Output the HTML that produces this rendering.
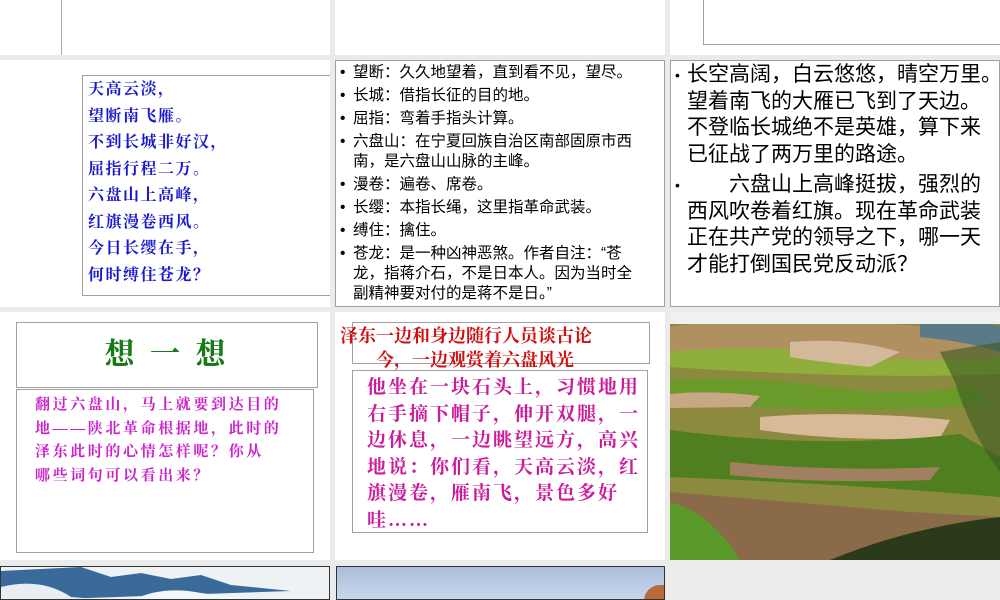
<!DOCTYPE html>
<html><head><meta charset="utf-8"><style>
*{margin:0;padding:0;box-sizing:border-box}
body{width:1000px;height:600px;background:#ebebeb;position:relative;overflow:hidden;font-family:"Liberation Sans","Noto Sans CJK SC",sans-serif}
.p{position:absolute;background:#fff;overflow:hidden}
.b{position:absolute;border:1px solid #a0a0a0;background:#fff}
.k{font-family:"Liberation Serif","Noto Serif CJK SC",serif;font-weight:bold;white-space:nowrap}
.it{position:relative;padding-left:13px;margin-bottom:3px;white-space:nowrap}
.it span{position:absolute;left:0}
svg{display:block}
</style></head><body>
<!-- row1 -->
<div class="p" style="left:0;top:0;width:330px;height:55px"><div style="position:absolute;left:61px;top:0;width:1px;height:55px;background:#aaa"></div></div>
<div class="p" style="left:335px;top:0;width:330px;height:55px"></div>
<div class="p" style="left:670px;top:0;width:330px;height:55px"><div class="b" style="left:33px;top:-2px;width:300px;height:47px"></div></div>
<!-- row2 -->
<div class="p" style="left:0;top:60px;width:330px;height:247px">
 <div class="b k" style="left:82px;top:15px;width:260px;height:221px;color:#1a1acc;font-size:16px;letter-spacing:1.5px;line-height:26.5px;padding:1px 0 0 5px">天高云淡，<br>望断南飞雁。<br>不到长城非好汉，<br>屈指行程二万。<br>六盘山上高峰，<br>红旗漫卷西风。<br>今日长缨在手，<br>何时缚住苍龙？</div>
</div>
<div class="p" style="left:335px;top:60px;width:330px;height:247px;border:1px solid #a0a0a0">
 <div style="position:absolute;left:4px;top:2px;width:330px;font-size:15.5px;line-height:20px;color:#000">
 <div class="it"><span>•</span>望断：久久地望着，直到看不见，望尽。</div>
 <div class="it"><span>•</span>长城：借指长征的目的地。</div>
 <div class="it"><span>•</span>屈指：弯着手指头计算。</div>
 <div class="it"><span>•</span>六盘山：在宁夏回族自治区南部固原市西<br>南，是六盘山山脉的主峰。</div>
 <div class="it"><span>•</span>漫卷：遍卷、席卷。</div>
 <div class="it"><span>•</span>长缨：本指长绳，这里指革命武装。</div>
 <div class="it"><span>•</span>缚住：擒住。</div>
 <div class="it"><span>•</span>苍龙：是一种凶神恶煞。作者自注：“苍<br>龙，指蒋介石，不是日本人。因为当时全<br>副精神要对付的是蒋不是日。”</div>
 </div>
</div>
<div class="p" style="left:670px;top:60px;width:330px;height:247px;border:1px solid #a0a0a0">
 <div style="position:absolute;left:4px;top:1px;width:360px;font-size:21px;line-height:26.5px;color:#000">
 <div class="it" style="padding-left:12px;margin-bottom:4px"><span style="font-size:14px">•</span>长空高阔，白云悠悠，晴空万里。<br>望着南飞的大雁已飞到了天边。<br>不登临长城绝不是英雄，算下来<br>已征战了两万里的路途。</div>
 <div class="it" style="padding-left:12px"><span style="font-size:14px">•</span>　　六盘山上高峰挺拔，强烈的<br>西风吹卷着红旗。现在革命武装<br>正在共产党的领导之下，哪一天<br>才能打倒国民党反动派？</div>
 </div>
</div>
<!-- row3 -->
<div class="p" style="left:0;top:312px;width:330px;height:248px">
 <div class="b k" style="left:16px;top:10px;width:302px;height:66px;color:#167a16;font-size:30px;text-align:center;padding:6px 0 0 0;letter-spacing:4px">想 一 想</div>
 <div class="b k" style="left:16px;top:77px;width:298px;height:164px;color:#cc22cc;font-size:15px;letter-spacing:2.6px;line-height:23.5px;padding:4px 0 0 18px">翻过六盘山，马上就要到达目的<br>地——陕北革命根据地，此时的<br>泽东此时的心情怎样呢？你从<br>哪些词句可以看出来？</div>
</div>
<div class="p" style="left:335px;top:312px;width:330px;height:248px">
 <div class="b" style="left:17px;top:10px;width:298px;height:42px"></div>
 <div class="k" style="position:absolute;left:5px;top:12px;width:325px;color:#d01010;font-size:18px;line-height:24px">泽东一边和身边随行人员谈古论<br>　　今，一边观赏着六盘风光</div>
 <div class="b k" style="left:17px;top:58px;width:296px;height:163px;color:#cc1a99;font-size:19px;letter-spacing:2px;line-height:26.5px;padding:4px 0 0 14px">他坐在一块石头上，习惯地用<br>右手摘下帽子，伸开双腿，一<br>边休息，一边眺望远方，高兴<br>地说：你们看，天高云淡，红<br>旗漫卷，雁南飞，景色多好<br>哇……</div>
</div>
<div class="p" style="left:670px;top:312px;width:330px;height:248px">
 <svg width="330" height="248" viewBox="0 0 330 248" preserveAspectRatio="none">
  <rect width="330" height="248" fill="#8c8a3e"/>
  <path d="M0 15 Q60 5 130 12 Q200 8 330 20 L330 50 L0 50Z" fill="#b09060"/>
  <path d="M250 12 Q300 8 330 14 L330 40 Q300 30 250 25Z" fill="#5a7a8a"/>
  <path d="M0 40 Q100 30 200 45 Q280 50 330 45 L330 62 Q200 68 0 55Z" fill="#8fae3c"/>
  <path d="M120 30 Q180 25 230 40 L200 55 Q150 50 120 45Z" fill="#d4b89a"/>
  <path d="M0 68 Q80 62 180 78 Q260 84 300 72 L320 92 Q200 104 0 90Z" fill="#6a9a2a"/>
  <path d="M0 82 Q40 78 90 84 L80 95 L0 96Z" fill="#c8a884"/>
  <path d="M90 105 Q180 98 280 108 L270 126 Q170 130 90 118Z" fill="#d8ba98"/>
  <path d="M0 118 Q150 138 290 122 L330 145 L330 185 Q180 172 0 165Z" fill="#4f7f1e"/>
  <path d="M60 150 Q160 160 270 155 L260 168 Q150 172 60 163Z" fill="#a08060"/>
  <path d="M0 180 Q120 190 240 200 L330 205 L330 248 L0 248Z" fill="#8a6a48"/>
  <path d="M0 190 Q40 200 70 248 L0 248Z" fill="#5a9a2a"/>
  <path d="M160 248 Q240 215 330 205 L330 248Z" fill="#2a3a1a"/>
  <path d="M270 40 L330 30 L330 160 Q300 120 285 70Z" fill="#3a5a22" opacity=".6"/>
  <rect width="330" height="12" fill="#eef1f2"/>
 </svg>
</div>
<!-- row4 -->
<div class="p" style="left:0;top:566px;width:330px;height:34px;border:1px solid #333">
 <svg width="330" height="34" viewBox="0 0 330 34"><rect width="330" height="34" fill="#eef2f5"/><path d="M0 4 L40 2 L80 0 L110 10 L140 6 L170 12 L200 8 L230 18 L290 24 L0 34Z" fill="#3a6a9a"/><path d="M0 20 Q40 10 70 30 L120 34 L0 34Z" fill="#e8eef3"/><path d="M130 34 Q160 18 200 26 L260 34Z" fill="#f4f7f9"/></svg>
</div>
<div class="p" style="left:336px;top:566px;width:329px;height:34px;border:1px solid #333;background:linear-gradient(#a8bedc,#c8d6ea)">
 <div style="position:absolute;right:0;top:18px;width:20px;height:16px;background:#b86a3a;border-radius:20px 0 0 0"></div>
</div>
<div class="p" style="left:670px;top:566px;width:330px;height:34px;background:#eceeed"></div>
</body></html>
